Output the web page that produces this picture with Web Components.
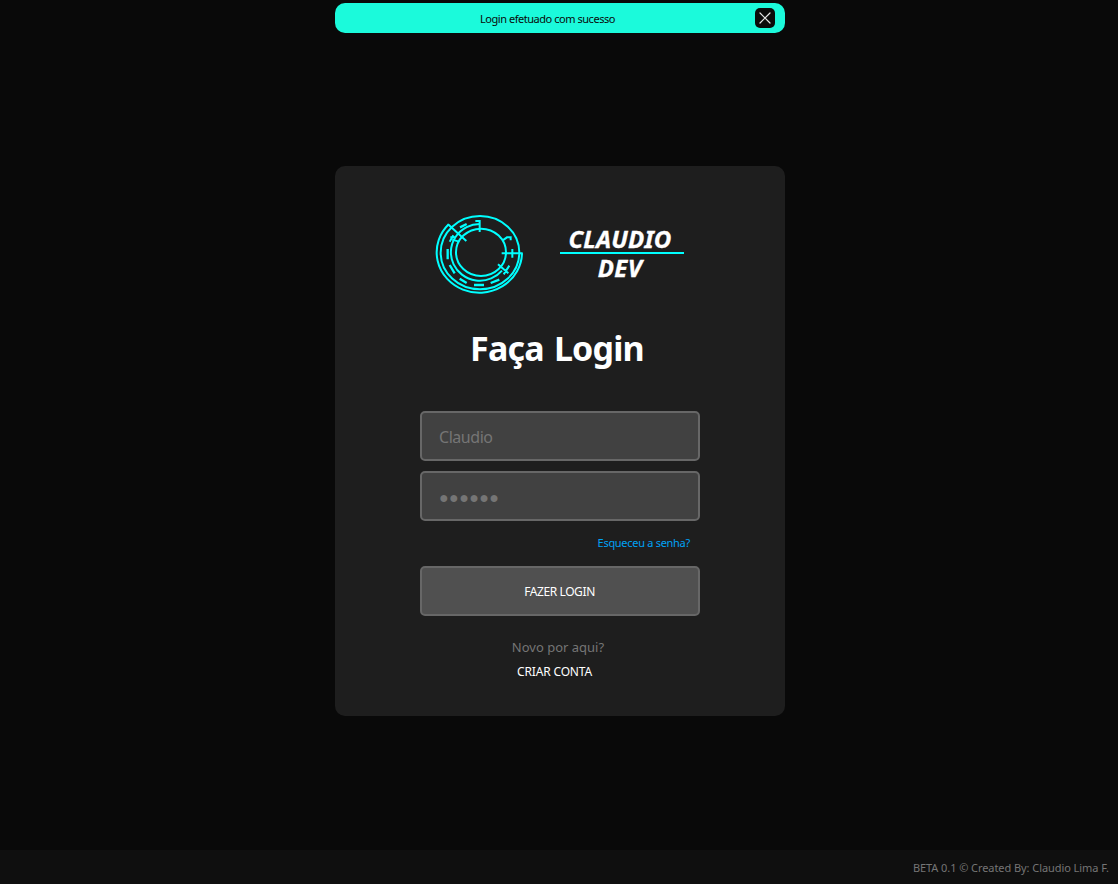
<!DOCTYPE html>
<html lang="pt-BR">
<head>
<meta charset="utf-8">
<title>Faça Login</title>
<style>
html,body{margin:0;height:100%;background:#090909;font-family:"Noto Sans","Open Sans",sans-serif}
</style>
</head>
<body>
<login-page></login-page>
<script>
const define = (name, html) => {
  const t = document.createElement('template');
  t.innerHTML = html;
  customElements.define(name, class extends HTMLElement {
    constructor() {
      super();
      this.attachShadow({mode: 'open'}).append(t.content.cloneNode(true));
    }
  });
};

define('toast-message', `
<style>
:host{display:grid;grid-template-columns:30px 1fr 30px;align-items:center;box-sizing:border-box;width:450px;height:30px;border-radius:10px;background:#1bfadb;color:#0a0a0a}
.msg{grid-column:2;text-align:center;font-size:11px;line-height:16px;letter-spacing:-.46px;padding:2px 25px 0 0;white-space:nowrap}
button{all:unset;display:block;width:20px;height:20px;border-radius:5px;background:#0b0b0b}
svg{display:block}
</style>
<span class="msg"><slot></slot></span>
<button aria-label="Fechar"><svg width="20" height="20" viewBox="0 0 20 20" fill="none" stroke="#e6e6e6" stroke-width="1.2" stroke-linecap="round"><path d="M5 5L15 15M15 5L5 15"/></svg></button>`);

define('ring-emblem', `
<style>:host{display:block;width:110px;height:100px}svg{display:block}</style>
<svg width="110" height="100" viewBox="0 0 330 300" fill="none" stroke="#00ffff" stroke-width="6">
<ellipse cx="168" cy="142" rx="75" ry="71"/>
<ellipse cx="165" cy="143" rx="118" ry="110"/>
<path d="M71 58A128 121 0 1 0 291 145"/>
<path d="M164 57A87 85 0 1 0 231 197"/>
<path d="M69 58L124 108M230 145H293M262 132V158M151 48H164V81M232 107L246 97H257V106M219 178L250 205M253 182L236 208M74 110L85 91M76 97H90M82 104L102 110"/>
<path d="M105 67L125 57M68 132V163M74 180L89 205M104 221L125 234M147 240H177M197 234L223 224" stroke-width="7"/>
</svg>`);

define('brand-name', `
<style>
:host{display:block;width:124px;color:#fff;text-align:center;font:italic 700 24px/26px "Noto Sans","Open Sans",sans-serif}
.a{height:26px;padding-right:4px;border-bottom:2px solid #00ffff;letter-spacing:.2px}
.b{height:26px;padding-top:1px;padding-right:4px;letter-spacing:.4px}
::slotted(span){display:block;-webkit-text-stroke:.35px #fff}
</style>
<div class="a"><slot name="first"></slot></div><div class="b"><slot name="second"></slot></div>`);

define('field-box', `
<style>
:host{display:flex;align-items:center;box-sizing:border-box;width:280px;height:50px;padding:2px 17px 0;border:2px solid #676767;border-radius:5px;background:#414141;color:#757575;font-size:16px;line-height:22px;letter-spacing:-.45px}
</style><slot></slot>`);

define('action-button', `
<style>
:host{display:flex;align-items:center;justify-content:center;box-sizing:border-box;width:280px;height:50px;border:2px solid #676767;border-radius:5px;background:#505050;color:#fff;font-size:12px;letter-spacing:-.4px;padding-right:1px}
</style><slot></slot>`);

define('login-card', `
<style>
:host{display:flex;flex-direction:column;align-items:center;box-sizing:border-box;width:450px;height:550px;border-radius:10px;background:#1e1e1e}
.brand{display:flex;align-self:stretch;padding:39px 0 0 90px;height:100px}
brand-name{margin:21px 0 0 25px}
h1{margin:18px 6px 0 0;height:50px;font-weight:700;font-size:34px;line-height:50px;letter-spacing:-.8px;word-spacing:2px;color:#fff;white-space:nowrap}
.fields{display:grid;gap:10px;margin-top:38px}
.dots{letter-spacing:.4px;font-size:16px}
.forgot{align-self:flex-end;margin:14px 95px 0 0;height:16px;font-size:11px;line-height:16px;letter-spacing:-.29px;color:#00a2f5}
action-button{margin-top:15px}
.new{margin:21px 4px 0 0;height:20px;font-size:13px;line-height:20px;color:#757575}
.create{margin:6px 11px 0 0;height:18px;font-size:12px;line-height:18px;letter-spacing:-.15px;color:#fff}
span{white-space:nowrap}
</style>
<div class="brand"><ring-emblem></ring-emblem><brand-name><span slot="first">CLAUDIO</span><span slot="second">DEV</span></brand-name></div>
<h1>Faça Login</h1>
<div class="fields"><field-box>Claudio</field-box><field-box><span class="dots">●●●●●●</span></field-box></div>
<span class="forgot">Esqueceu a senha?</span>
<action-button>FAZER LOGIN</action-button>
<span class="new">Novo por aqui?</span>
<span class="create">CRIAR CONTA</span>`);

define('page-footer', `
<style>:host{display:flex;justify-content:flex-end;align-items:center;box-sizing:border-box;height:34px;padding:2px 9px 0 0;background:#0f0f0f;color:#757575;font-size:11px;line-height:16px;letter-spacing:-.07px;white-space:nowrap}</style><slot></slot>`);

define('login-page', `
<style>
:host{display:flex;flex-direction:column;height:884px;overflow:hidden}
main{flex:1;display:flex;flex-direction:column;align-items:flex-start;padding:3px 0 0 335px}
login-card{margin-top:133px}
</style>
<main><toast-message>Login efetuado com sucesso</toast-message><login-card></login-card></main>
<page-footer><span>BETA 0.1 © Created By: Claudio Lima F.</span></page-footer>`);
</script>
</body>
</html>
